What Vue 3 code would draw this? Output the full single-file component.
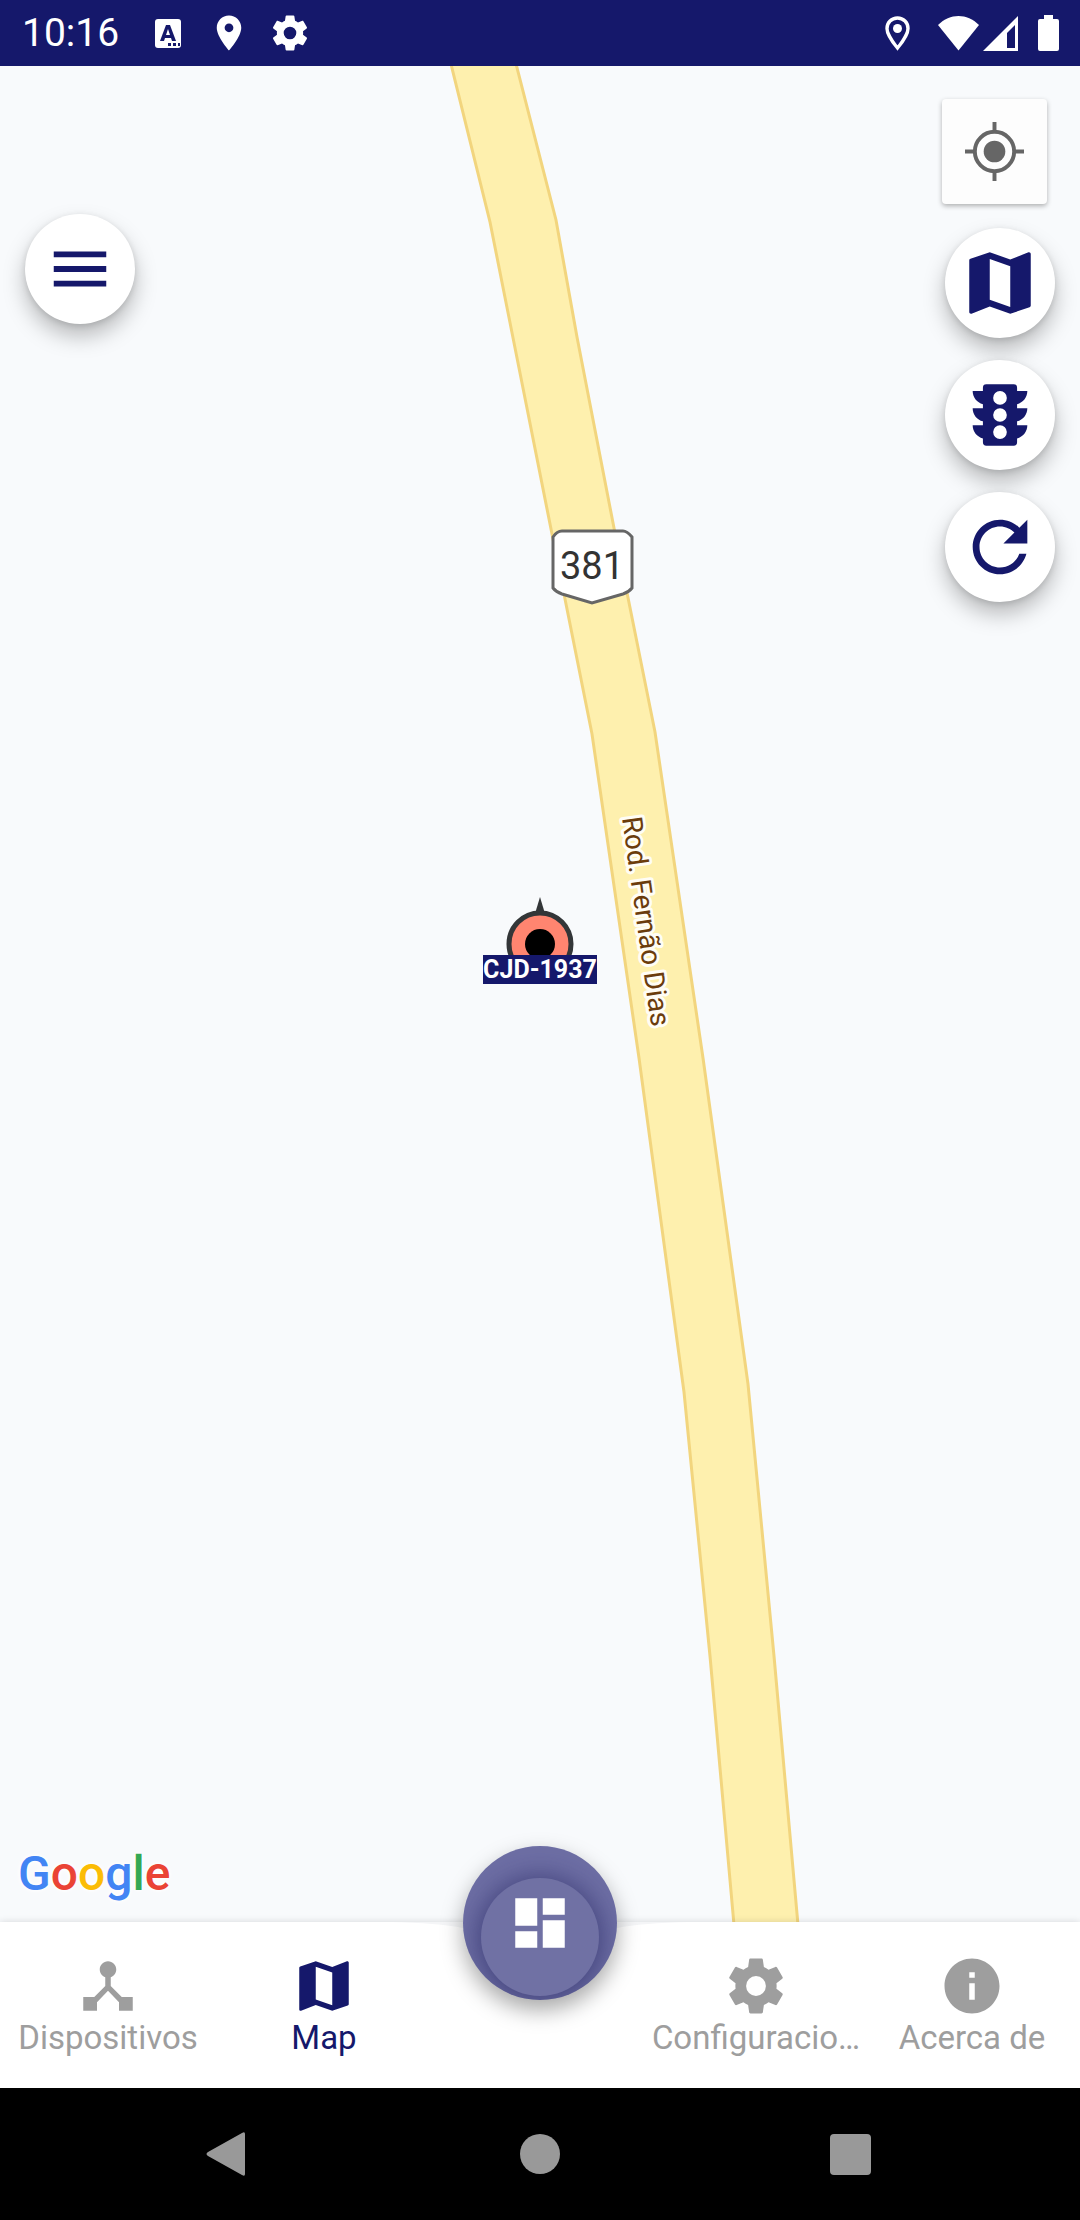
<template>
  <div class="screen">
    <header class="status-bar">
      <span class="clock">10:16</span>
      <div class="notifications">
        <svg viewBox="0 0 42 42" aria-hidden="true">
          <rect x="8" y="7" width="26" height="29" rx="3" />
          <path class="cut" d="M19 13h4l6 16h-4l-1-3h-6l-1 3h-4zM21 17l-2 6h4z" fill-rule="evenodd" />
          <path class="cut" d="M21 31h3v3h-3zM26 31h3v3h-3zM31 31h2v3h-2z" />
        </svg>
        <svg viewBox="0 0 24 24" aria-hidden="true"><path :d="icons.place" /></svg>
        <svg viewBox="0 0 24 24" aria-hidden="true"><path :d="icons.settings" /></svg>
      </div>
      <div class="system">
        <svg class="gps" viewBox="0 0 25 35" aria-hidden="true">
          <path d="M12.5 2C6.5 2 2 6.5 2 12.5C2 19.5 12.5 32 12.5 32S23 19.5 23 12.5C23 6.5 18.5 2 12.5 2z" fill="none" stroke="#fff" stroke-width="3.4" />
          <circle cx="12.5" cy="12.5" r="4.5" />
        </svg>
        <svg class="wifi" viewBox="0 0 41 35" aria-hidden="true">
          <path d="M0 9C12-3 29-3 41 9L20.5 34.5z" />
        </svg>
        <svg class="signal" viewBox="0 0 35 35" aria-hidden="true">
          <path d="M35 0V35H0zM32 9L24 17V32H32z" fill-rule="evenodd" />
        </svg>
        <svg class="battery" viewBox="0 0 21 36" aria-hidden="true">
          <path d="M6 0h9v4h4a2 2 0 0 1 2 2v28a2 2 0 0 1-2 2H2a2 2 0 0 1-2-2V6a2 2 0 0 1 2-2h4z" />
        </svg>
      </div>
    </header>

    <main class="map">
      <svg class="map-canvas" viewBox="0 0 1080 1856" preserveAspectRatio="xMidYMid slice">
        <path
          class="road"
          d="M449 -10L490 156L552 468L592 668L639 992L684 1326L710 1590L735 1870H799L774 1590L748 1318L703 992L655 666L614 462L577 271L556 154L514 -10z"
        />

        <g class="shield">
          <path d="M562 465H623Q627 465 632 471V522Q629 526 623 528L592 537L562 528Q556 526 553 522V471Q557 465 562 465z" />
          <text x="592" y="513">381</text>
        </g>

        <text class="road-name" transform="translate(622 752) rotate(82)">Rod. Fernão Dias</text>

        <g class="marker">
          <path d="M540 831L546 851H534z" fill="#333638" />
          <circle cx="540" cy="878" r="31" fill="#ff8570" stroke="#333638" stroke-width="5" />
          <circle cx="540" cy="878" r="15" />
          <rect x="483" y="889" width="114" height="29" fill="#15186b" />
          <text x="540" y="912">CJD-1937</text>
        </g>
      </svg>

      <button class="round-button menu-button" aria-label="Menu">
        <svg viewBox="0 0 24 24"><path :d="icons.menu" /></svg>
      </button>

      <div class="map-controls">
        <button class="locate-button" aria-label="My location">
          <svg viewBox="0 0 60 60">
            <circle cx="30" cy="30" r="20" fill="none" stroke="#666" stroke-width="4" />
            <circle cx="30" cy="30" r="11" />
            <path d="M28 0h4v9h-4zM28 51h4v9h-4zM0 28h9v4H0zM51 28h9v4h-9z" />
          </svg>
        </button>
        <button v-for="control in controls" :key="control.icon" class="round-button" :aria-label="control.label">
          <svg viewBox="0 0 24 24"><path :d="icons[control.icon]" /></svg>
        </button>
      </div>

      <div class="google">
        <span class="blue">G</span><span class="red">o</span><span class="yellow">o</span><span class="blue">g</span><span class="green">l</span><span class="red">e</span>
      </div>
    </main>

    <nav class="tabs">
      <svg class="notch" viewBox="0 0 300 8" aria-hidden="true">
        <path d="M0 0Q48 1 73 6H227Q252 1 300 0z" />
      </svg>
      <template v-for="tab in tabs" :key="tab.icon">
        <button v-if="tab.label" class="tab" :class="{ active: active === tab.icon }" @click="active = tab.icon">
          <svg viewBox="0 0 24 24" aria-hidden="true"><path :d="icons[tab.icon]" /></svg>
          <span>{{ tab.label }}</span>
        </button>
        <div v-else class="tab-center">
          <button class="fab" aria-label="Dashboard">
            <span class="fab-inner"></span>
            <svg viewBox="0 0 24 24"><path :d="icons[tab.icon]" /></svg>
          </button>
        </div>
      </template>
    </nav>

    <footer class="system-nav">
      <button aria-label="Back">
        <svg viewBox="0 0 48 48"><path d="M38 3Q41 1 41 4V44Q41 47 38 45L4 26Q1 24 4 22z" /></svg>
      </button>
      <button aria-label="Home">
        <svg viewBox="0 0 48 48"><circle cx="24" cy="24" r="20" /></svg>
      </button>
      <button aria-label="Recent apps">
        <svg viewBox="0 0 48 48"><rect x="2" y="4" width="41" height="41" rx="4" /></svg>
      </button>
    </footer>
  </div>
</template>

<script setup>
import { ref } from 'vue'

const icons = {
  menu: 'M3 18h18v-2H3v2zm0-5h18v-2H3v2zm0-7v2h18V6H3z',
  map: 'M20.5 3l-.16.03L15 5.1 9 3 3.36 4.9c-.21.07-.36.25-.36.48V20.5c0 .28.22.5.5.5l.16-.03L9 18.9l6 2.1 5.64-1.9c.21-.07.36-.25.36-.48V3.5c0-.28-.22-.5-.5-.5zM15 19l-6-2.11V5l6 2.11V19z',
  traffic: 'M12 9A2 2 0 0 1 12 5A2 2 0 0 1 12 9M12 14A2 2 0 0 1 12 10A2 2 0 0 1 12 14M12 19A2 2 0 0 1 12 15A2 2 0 0 1 12 19M20 10H17V8.86C18.72 8.41 20 6.86 20 5H17V4A1 1 0 0 0 16 3H8A1 1 0 0 0 7 4V5H4C4 6.86 5.28 8.41 7 8.86V10H4C4 11.86 5.28 13.41 7 13.86V15H4C4 16.86 5.28 18.41 7 18.86V20A1 1 0 0 0 8 21H16A1 1 0 0 0 17 20V18.86C18.72 18.41 20 16.86 20 15H17V13.86C18.72 13.41 20 11.86 20 10Z',
  refresh: 'M17.65 6.35C16.2 4.9 14.21 4 12 4c-4.42 0-7.99 3.58-7.99 8s3.57 8 7.99 8c3.73 0 6.84-2.55 7.73-6h-2.08c-.82 2.33-3.04 4-5.65 4-3.31 0-6-2.69-6-6s2.69-6 6-6c1.66 0 3.14.69 4.22 1.78L13 11h7V4l-2.35 2.35z',
  place: 'M12 2C8.13 2 5 5.13 5 9c0 5.25 7 13 7 13s7-7.75 7-13c0-3.87-3.13-7-7-7zm0 9.5a2.5 2.5 0 0 1 0-5 2.5 2.5 0 0 1 0 5z',
  devices: 'M17 16l-4-4V8.82C14.16 8.4 15 7.3 15 6c0-1.66-1.34-3-3-3S9 4.34 9 6c0 1.3.84 2.4 2 2.82V12l-4 4H3v5h5v-3.05l4-4.2 4 4.2V21h5v-5h-4z',
  dashboard: 'M3 13h8V3H3v10zm0 8h8v-6H3v6zm10 0h8V11h-8v10zm0-18v6h8V3h-8z',
  settings: 'M19.43 12.98c.04-.32.07-.64.07-.98s-.03-.66-.07-.98l2.11-1.65c.19-.15.24-.42.12-.64l-2-3.46c-.12-.22-.39-.3-.61-.22l-2.49 1c-.52-.4-1.08-.73-1.69-.98l-.38-2.65C14.46 2.18 14.25 2 14 2h-4c-.25 0-.46.18-.49.42l-.38 2.65c-.61.25-1.17.59-1.69.98l-2.49-1c-.23-.09-.49 0-.61.22l-2 3.46c-.13.22-.07.49.12.64l2.11 1.65c-.04.32-.07.65-.07.98s.03.66.07.98l-2.11 1.65c-.19.15-.24.42-.12.64l2 3.46c.12.22.39.3.61.22l2.49-1c.52.4 1.08.73 1.69.98l.38 2.65c.03.24.24.42.49.42h4c.25 0 .46-.18.49-.42l.38-2.65c.61-.25 1.17-.59 1.69-.98l2.49 1c.23.09.49 0 .61-.22l2-3.46c.12-.22.07-.49-.12-.64l-2.11-1.65zM12 15.6a3.6 3.6 0 0 1 0-7.2 3.6 3.6 0 0 1 0 7.2z',
  info: 'M12 2C6.48 2 2 6.48 2 12s4.48 10 10 10 10-4.48 10-10S17.52 2 12 2zm1 15h-2v-6h2v6zm0-8h-2V7h2v2z'
}

const controls = [
  { icon: 'map', label: 'Map type' },
  { icon: 'traffic', label: 'Traffic' },
  { icon: 'refresh', label: 'Refresh' }
]

const tabs = [
  { icon: 'devices', label: 'Dispositivos' },
  { icon: 'map', label: 'Map' },
  { icon: 'dashboard' },
  { icon: 'settings', label: 'Configuracio…' },
  { icon: 'info', label: 'Acerca de' }
]

const active = ref('map')
</script>

<style>
body {
  margin: 0;
}
</style>

<style scoped>
.screen {
  display: flex;
  flex-direction: column;
  min-height: 100vh;
  font-family: Roboto, sans-serif;
  background: #f8fafc;
}

button {
  padding: 0;
  border: none;
  background: none;
  color: inherit;
  font-family: inherit;
  cursor: pointer;
}

svg {
  display: block;
  fill: currentColor;
}

.status-bar {
  display: flex;
  align-items: center;
  height: 66px;
  padding: 0 21px 0 22px;
  background: #15186b;
  color: #fff;
}

.clock {
  font-size: 39px;
  line-height: 46px;
}

.notifications {
  display: flex;
  gap: 19px;
  margin-left: 28px;
}

.notifications svg {
  width: 42px;
  height: 42px;
}

.cut {
  fill: #15186b;
}

.system {
  display: flex;
  align-items: center;
  margin-left: auto;
}

.gps {
  width: 25px;
  height: 35px;
  margin-right: 28px;
}

.wifi {
  width: 41px;
  height: 35px;
  margin-right: 4px;
}

.signal {
  width: 35px;
  height: 35px;
  margin-right: 20px;
}

.battery {
  width: 21px;
  height: 36px;
}

.map {
  position: relative;
  display: flex;
  flex: 1;
  overflow: hidden;
}

.map-canvas {
  position: absolute;
  inset: 0;
  width: 100%;
  height: 100%;
  fill: #000;
}

.road {
  fill: #fef0ae;
  stroke: #f2d57e;
  stroke-width: 3;
}

.shield path {
  fill: #fff;
  stroke: #666;
  stroke-width: 3;
}

.shield text {
  font-size: 38px;
  fill: #333;
  text-anchor: middle;
}

.road-name {
  font-size: 28px;
  fill: #6b3c0c;
  stroke: #fffdf5;
  stroke-width: 6px;
  stroke-linejoin: round;
  paint-order: stroke;
}

.marker text {
  font-size: 25px;
  font-weight: 700;
  fill: #fff;
  text-anchor: middle;
}

.round-button {
  display: grid;
  place-items: center;
  width: 110px;
  height: 110px;
  border-radius: 50%;
  background: #fff;
  color: #15186b;
  box-shadow: 0 12px 22px rgba(0, 0, 0, 0.26), 0 2px 6px rgba(0, 0, 0, 0.12);
}

.round-button svg {
  width: 82px;
  height: 82px;
}

.menu-button {
  position: absolute;
  top: 148px;
  left: 25px;
}

.menu-button svg {
  width: 70px;
  height: 70px;
}

.map-controls {
  position: absolute;
  top: 33px;
  right: 25px;
  display: flex;
  flex-direction: column;
  align-items: flex-end;
  gap: 22px;
}

.locate-button {
  display: grid;
  place-items: center;
  width: 105px;
  height: 105px;
  margin: 0 8px 2px 0;
  border-radius: 4px;
  background: #fdfdfd;
  color: #666;
  box-shadow: 0 2px 5px rgba(0, 0, 0, 0.3);
}

.locate-button svg {
  width: 59px;
  height: 59px;
}

.google {
  display: flex;
  align-self: flex-end;
  position: relative;
  margin: 0 18px 18px;
  font-size: 48px;
  font-weight: 500;
  line-height: 60px;
  text-shadow: 0 0 4px #fff, 0 0 6px #fff;
}

.blue {
  color: #4285f4;
}

.red {
  color: #ea4335;
}

.yellow {
  color: #fbbc05;
}

.green {
  color: #34a853;
}

.tabs {
  position: relative;
  display: grid;
  grid-template-columns: repeat(5, minmax(0, 1fr));
  min-height: 166px;
  background: #fff;
  box-shadow: 0 0 7px rgba(0, 0, 0, 0.14);
}

.notch {
  position: absolute;
  top: 0;
  left: 50%;
  width: 300px;
  height: 8px;
  transform: translateX(-50%);
  fill: #f4f5f7;
}

.tab {
  display: flex;
  flex-direction: column;
  align-items: center;
  justify-content: center;
  color: #9e9e9e;
  font-size: 33px;
  line-height: 38px;
  white-space: nowrap;
}

.tab svg {
  width: 66px;
  height: 66px;
}

.tab.active {
  color: #15186b;
}

/* shadow lives on the wrapper because the button clips its inner disc */
.tab-center {
  display: flex;
  align-items: flex-start;
  justify-content: center;
  filter: drop-shadow(0 10px 11px rgba(0, 0, 0, 0.34));
}

.fab {
  position: relative;
  display: grid;
  place-items: center;
  width: 154px;
  height: 154px;
  margin-top: -76px;
  border-radius: 50%;
  overflow: hidden;
  background: #6d6ea4;
  color: #fff;
}

.fab-inner {
  position: absolute;
  top: 32px;
  left: 18px;
  width: 118px;
  height: 118px;
  border-radius: 50%;
  background: #7071a4;
  box-shadow: 0 2px 24px 4px rgba(35, 35, 95, 0.55);
}

.fab svg {
  position: relative;
  width: 66px;
  height: 66px;
}

.system-nav {
  display: grid;
  grid-template-columns: repeat(3, 1fr);
  align-items: center;
  justify-items: center;
  min-height: 132px;
  padding: 0 72px;
  background: #000;
  color: #999;
}

.system-nav svg {
  width: 48px;
  height: 48px;
}
</style>
